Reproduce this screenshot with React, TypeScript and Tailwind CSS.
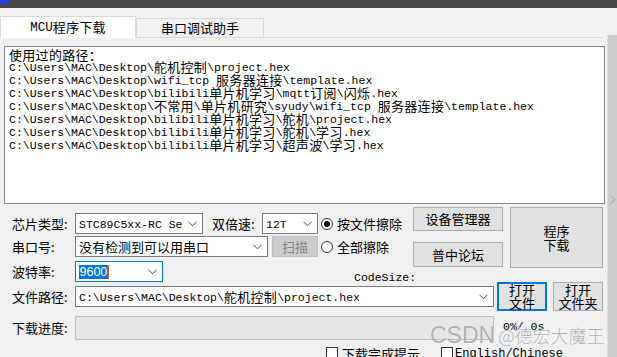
import type { ReactNode } from "react";

const CJK = /([\u3000-\u9fff\uff00-\uffef]+)/;

function Mixed({ text }: { text: string }) {
	const parts = text.split(CJK);
	return (
		<>
			{parts.map((p, i) =>
				CJK.test(p) ? (
					<span
						key={i}
						className="font-['Noto_Sans_CJK_SC',sans-serif] text-[13px] tracking-[0.3px] align-[-1px]"
					>
						{p}
					</span>
				) : (
					<span key={i}>{p}</span>
				),
			)}
		</>
	);
}

function Chevron() {
	return (
		<svg width="9" height="6" viewBox="0 0 9 6" className="shrink-0">
			<polyline points="0.5,0.8 4.5,4.8 8.5,0.8" fill="none" stroke="#444" strokeWidth="1" />
		</svg>
	);
}

function Combo({
	width,
	focused,
	children,
}: {
	width: string;
	focused?: boolean;
	children: ReactNode;
}) {
	return (
		<div
			className={`${width} h-[21px] shrink-0 flex items-center justify-between gap-[4px] bg-white pl-[3px] pr-[5px] overflow-hidden whitespace-nowrap border ${
				focused ? "border-[#0078d7]" : "border-[#7a7a7a]"
			}`}
		>
			<div className="min-w-0 overflow-hidden">{children}</div>
			<Chevron />
		</div>
	);
}

function Label({ children }: { children: ReactNode }) {
	return <div className="w-[75px] shrink-0 pl-[12px] whitespace-nowrap">{children}</div>;
}

function Radio({ checked }: { checked?: boolean }) {
	return (
		<div className="w-[12px] h-[12px] shrink-0 rounded-full border border-[#333] bg-white flex items-center justify-center">
			{checked && <div className="w-[6px] h-[6px] rounded-full bg-[#111]" />}
		</div>
	);
}

function Check() {
	return <div className="w-[12px] h-[12px] shrink-0 border border-[#333] bg-white" />;
}

const mono = "font-['Liberation_Mono',monospace] text-[11.5px]";

const history = [
	"使用过的路径：",
	"C:\\Users\\MAC\\Desktop\\舵机控制\\project.hex",
	"C:\\Users\\MAC\\Desktop\\wifi_tcp 服务器连接\\template.hex",
	"C:\\Users\\MAC\\Desktop\\bilibili单片机学习\\mqtt订阅\\闪烁.hex",
	"C:\\Users\\MAC\\Desktop\\不常用\\单片机研究\\syudy\\wifi_tcp 服务器连接\\template.hex",
	"C:\\Users\\MAC\\Desktop\\bilibili单片机学习\\舵机\\project.hex",
	"C:\\Users\\MAC\\Desktop\\bilibili单片机学习\\舵机\\学习.hex",
	"C:\\Users\\MAC\\Desktop\\bilibili单片机学习\\超声波\\学习.hex",
];

const btn = "bg-[#e1e1e1] border border-[#adadad] flex flex-col items-center justify-center shrink-0";

export default function App() {
	return (
		<div className="relative w-[617px] h-[357px] overflow-hidden bg-[#f0f0f0] flex flex-col font-['Noto_Sans_CJK_SC',sans-serif] text-[13px] leading-[16px] text-black">
			<div className="h-[8px] shrink-0 bg-[#4a4846] flex">
				<div className="w-[10px] h-[4px] bg-[#2741e0]" />
			</div>

			<div className="flex flex-1 min-h-0">
				<div className="w-[607px] shrink-0 flex flex-col">
					{/* tabs */}
					<div className="mt-[8px] flex h-[22px] shrink-0">
						<div className="w-[136px] h-[22px] bg-white border border-b-0 border-[#d9d9d9] flex items-center justify-center">
							<span className={`${mono} text-[12.5px]`}>
								<Mixed text="MCU程序下载" />
							</span>
						</div>
						<div className="w-[128px] h-[20px] mt-[2px] border border-[#d9d9d9] flex items-center justify-center">
							串口调试助手
						</div>
						<div className="w-[339px] h-[22px] border-b border-[#d9d9d9]" />
					</div>

					{/* history box */}
					<div
						className={`mt-[8px] ml-[4px] w-[601px] h-[158px] shrink-0 bg-white border border-[#828790] pl-[4px] pt-[2px] ${mono} leading-[12.8px] whitespace-nowrap`}
					>
						{history.map((line) => (
							<div key={line} className="h-[12.9px] flex items-center">
								<span>
									<Mixed text={line} />
								</span>
							</div>
						))}
					</div>

					{/* chip / port / baud block */}
					<div className="flex h-[78px] shrink-0">
						<div className="w-[408px] shrink-0 pt-[9px] flex flex-col">
							<div className="flex h-[21px] items-center">
								<Label>芯片类型:</Label>
								<Combo width="w-[128px]">
									<span className={mono}>STC89C5xx-RC Se</span>
								</Combo>
								<div className="ml-[9px] w-[50px] shrink-0">双倍速:</div>
								<Combo width="w-[56px]">
									<span className={mono}>12T</span>
								</Combo>
								<div className="ml-[3px]">
									<Radio checked />
								</div>
								<div className="ml-[4px] whitespace-nowrap">按文件擦除</div>
							</div>
							<div className="mt-[2px] flex h-[21px] items-center">
								<Label>串口号:</Label>
								<Combo width="w-[193px]">没有检测到可以用串口</Combo>
								<div className="ml-[4px] w-[46px] h-[21px] shrink-0 bg-[#cccccc] border border-[#bfbfbf] text-[#838383] flex items-center justify-center">
									扫描
								</div>
								<div className="ml-[3px]">
									<Radio />
								</div>
								<div className="ml-[4px] whitespace-nowrap">全部擦除</div>
							</div>
							<div className="mt-[4px] flex h-[21px] items-center">
								<Label>波特率:</Label>
								<Combo width="w-[88px]" focused>
									<div className="flex items-center">
										<span className="bg-[#0078d7] text-white px-[0.5px] leading-[14px] font-['Liberation_Sans',sans-serif] text-[12.5px]">
											9600
										</span>
										<span className="w-[1px] h-[14px] bg-[#c8641e]" />
									</div>
								</Combo>
								<div className={`ml-[191px] self-end mb-[-4px] whitespace-nowrap ${mono}`}>CodeSize:</div>
							</div>
						</div>

						<div className="ml-[5px] w-[90px] shrink-0 pt-[3px] flex flex-col">
							<div className={`${btn} h-[24px]`}>设备管理器</div>
							<div className={`${btn} h-[25px] mt-[11px]`}>普中论坛</div>
						</div>

						<div className={`${btn} ml-[7px] mt-[3px] w-[93px] h-[61px] leading-[14px]`}>
							<span>程序</span>
							<span>下载</span>
						</div>
					</div>

					{/* file path */}
					<div className="flex h-[29px] shrink-0 items-center">
						<Label>文件路径:</Label>
						<Combo width="w-[419px]">
							<span className={mono}>
								<Mixed text="C:\Users\MAC\Desktop\舵机控制\project.hex" />
							</span>
						</Combo>
						<div className="ml-[3px] w-[50px] h-[29px] shrink-0 bg-[#e1e1e1] border-2 border-[#0078d7] flex flex-col items-center justify-center leading-[12.5px]">
							<span>打开</span>
							<span>文件</span>
						</div>
						<div className={`${btn} ml-[6px] w-[50px] h-[29px] leading-[12.5px]`}>
							<span>打开</span>
							<span>文件夹</span>
						</div>
					</div>

					{/* progress */}
					<div className="mt-[5px] flex h-[24px] shrink-0 items-center">
						<Label>下载进度:</Label>
						<div className="w-[419px] h-[24px] shrink-0 bg-[#e6e6e6] border border-[#bcbcbc]" />
						<div className={`ml-[9px] self-start mt-[3px] whitespace-nowrap ${mono}`}>0%/ 0s</div>
					</div>

					{/* options */}
					<div className="mt-[6px] flex items-start pl-[326px] shrink-0">
						<div className="mt-[1px]">
							<Check />
						</div>
						<div className="ml-[4px] w-[99px] whitespace-nowrap">下载完成提示</div>
						<div className="mt-[1px]">
							<Check />
						</div>
						<div className={`ml-[2px] whitespace-nowrap ${mono} text-[12px]`}>English/Chinese</div>
					</div>
				</div>

				<div className="w-[10px] mt-[27px] shrink-0 bg-[#cdcdcd] border-l border-[#dedede] flex flex-col items-center">
					<svg width="6" height="9" viewBox="0 0 6 9" className="mt-[160px]">
						<polyline points="0.8,0.5 4.8,4.5 0.8,8.5" fill="none" stroke="#9a9a9a" strokeWidth="1" />
					</svg>
				</div>
			</div>

			<div className="absolute left-[430px] top-[322px] flex items-baseline leading-[26px] font-light text-[#a3a3a3]/85 whitespace-nowrap [text-shadow:0_0_1px_#ffffff]">
				<span className="text-[23px] font-['Liberation_Sans',sans-serif] font-normal">CSDN</span>
				<span className="ml-[3px] text-[18px]">@德宏大魔王</span>
			</div>
		</div>
	);
}
